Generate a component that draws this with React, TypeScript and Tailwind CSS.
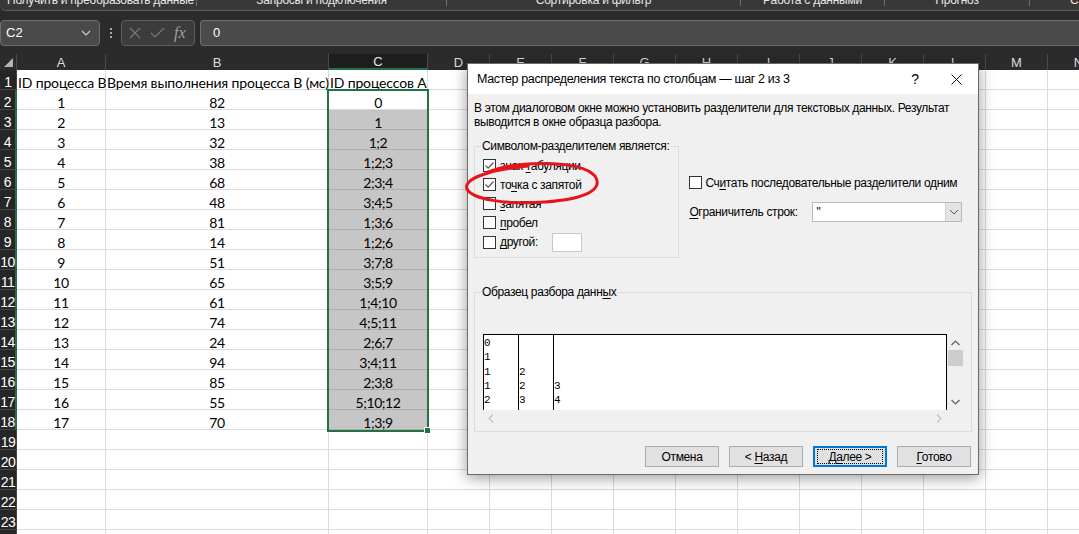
import React from 'react';

const COLS: { key: string; w: number }[] = [
  { key: 'A', w: 89 },
  { key: 'B', w: 223 },
  { key: 'C', w: 99 },
  { key: 'D', w: 62 },
  { key: 'E', w: 62 },
  { key: 'F', w: 62 },
  { key: 'G', w: 62 },
  { key: 'H', w: 62 },
  { key: 'I', w: 62 },
  { key: 'J', w: 62 },
  { key: 'K', w: 62 },
  { key: 'L', w: 62 },
  { key: 'M', w: 62 },
  { key: 'N', w: 62 },
];

const DATA: [number, number, string][] = [
  [1, 82, '0'],
  [2, 13, '1'],
  [3, 32, '1;2'],
  [4, 38, '1;2;3'],
  [5, 68, '2;3;4'],
  [6, 48, '3;4;5'],
  [7, 81, '1;3;6'],
  [8, 14, '1;2;6'],
  [9, 51, '3;7;8'],
  [10, 65, '3;5;9'],
  [11, 61, '1;4;10'],
  [12, 74, '4;5;11'],
  [13, 24, '2;6;7'],
  [14, 94, '3;4;11'],
  [15, 85, '2;3;8'],
  [16, 55, '5;10;12'],
  [17, 70, '1;3;9'],
];

const cellFont = "font-['Lato','Open_Sans',sans-serif]";
const uiFont = "font-['Liberation_Sans','Noto_Sans',sans-serif]";

function Ribbon() {
  const groups = [
    { w: 197, label: 'Получить и преобразовать данные' },
    { w: 250, label: 'Запросы и подключения' },
    { w: 294, label: 'Сортировка и фильтр' },
    { w: 144, label: 'Работа с данными' },
    { w: 145, label: 'Прогноз' },
    { w: 120, label: 'Структура' },
  ];
  return (
    <div className="h-[11px] overflow-hidden rounded-bl-[6px] border-b border-[#5c5c5c] bg-[#383838]">
      <div className={`-mt-[7px] flex h-[14px] ${uiFont} text-[12px] leading-[14px] tracking-[-0.25px] text-[#e6e6e6]`}>
        {groups.map((g, i) => (
          <div key={i} className="flex shrink-0 items-start" style={{ width: g.w }}>
            <span className={`flex-1 whitespace-nowrap ${i === 0 ? 'pl-[7px]' : i === 5 ? 'pl-[40px]' : 'text-center'}`}>{g.label}</span>
            {i < 5 && <span className="mt-[7px] h-[6px] w-px bg-[#707070]" />}
          </div>
        ))}
      </div>
    </div>
  );
}

function FormulaBar() {
  return (
    <div className={`flex h-[26px] items-stretch ${uiFont}`}>
      <div className="flex w-[100px] shrink-0 items-center justify-between rounded-[4px] border border-[#6e6e6e] bg-[#4a4a4a] pl-[5px] pr-[8px] text-[13px] text-white">
        <span>C2</span>
        <svg width="10" height="6" viewBox="0 0 10 6">
          <path d="M1 1 L5 5 L9 1" fill="none" stroke="#d0d0d0" strokeWidth="1.1" />
        </svg>
      </div>
      <div className="flex w-[21px] shrink-0 flex-col items-center justify-center gap-[2px]">
        <span className="h-[2px] w-[2px] bg-[#a8a8a8]" />
        <span className="h-[2px] w-[2px] bg-[#a8a8a8]" />
        <span className="h-[2px] w-[2px] bg-[#a8a8a8]" />
      </div>
      <div className="flex w-[74px] shrink-0 items-center gap-[9px] rounded-[4px] border border-[#5e5e5e] bg-[#3c3c3c] pl-[7px]">
        <svg width="12" height="12" viewBox="0 0 12 12">
          <path d="M1 1 L11 11 M11 1 L1 11" stroke="#7c7c7c" strokeWidth="1.1" />
        </svg>
        <svg width="15" height="12" viewBox="0 0 15 12">
          <path d="M1 6 L5 10 L14 1" fill="none" stroke="#7c7c7c" strokeWidth="1.1" />
        </svg>
        <span className="font-['Liberation_Serif',serif] text-[16px] italic leading-none text-[#a0a0a0]">fx</span>
      </div>
      <div className="ml-[5px] flex flex-1 items-center rounded-l-[4px] border-y border-l border-[#6e6e6e] bg-[#4a4a4a] pl-[12px] text-[13px] text-white">
        0
      </div>
    </div>
  );
}

function Grid() {
  const total = 24;
  return (
    <div className={`relative ${cellFont}`}>
      {/* column header row */}
      <div className="flex h-[16px]">
        <div className="relative w-[17px] shrink-0 border-r border-[#4a4a4a] bg-[#2b2b2b]">
          <svg className="absolute bottom-[3px] right-[3px]" width="9" height="9" viewBox="0 0 9 9">
            <path d="M9 0 L9 9 L0 9 Z" fill="#b4b4b4" />
          </svg>
        </div>
        {COLS.map((c) => (
          <div
            key={c.key}
            style={{ width: c.w }}
            className={`flex shrink-0 items-center justify-center border-r border-[#4a4a4a] text-[13px] leading-none ${uiFont} ${
              c.key === 'C' ? 'border-b-2 border-b-[#217346] bg-[#1e1e1e] text-[#e8e8e8]' : 'bg-[#2b2b2b] text-[#dcdcdc]'
            }`}
          >
            {c.key}
          </div>
        ))}
      </div>
      {Array.from({ length: total }, (_, i) => {
        const r = i + 1;
        const d = r >= 2 && r <= 18 ? DATA[r - 2] : null;
        const sel = r >= 2 && r <= 18;
        return (
          <div key={r} className="flex h-[20px]">
            <div
              className={`flex w-[17px] shrink-0 items-center justify-center border-b border-[#444] bg-[#262626] pt-[5px] text-[14px] leading-none tracking-[-0.5px] text-white ${uiFont} ${
                sel ? 'border-r-2 border-r-[#217346]' : 'border-r border-r-[#444]'
              }`}
            >
              {r}
            </div>
            {COLS.map((c) => {
              let content: React.ReactNode = null;
              let cls = 'bg-white border-[#dadada]';
              let align = 'justify-center tracking-[-0.4px]';
              if (r === 1) {
                align = 'justify-start pl-[1px] tracking-[-0.15px]';
                if (c.key === 'A') content = 'ID процесса В';
                if (c.key === 'B') content = 'Время выполнения процесса В (мс)';
                if (c.key === 'C') content = 'ID процессов А';
              } else if (d) {
                if (c.key === 'A') content = d[0];
                if (c.key === 'B') content = d[1];
                if (c.key === 'C') content = d[2];
              }
              if (c.key === 'C' && r >= 3 && r <= 18) cls = 'bg-[#c6c6c6] border-[#aeaeae]';
              return (
                <div
                  key={c.key}
                  style={{ width: c.w }}
                  className={`flex shrink-0 items-end whitespace-nowrap border-b border-r text-[14px] leading-[12px] text-black ${align} ${cls}`}
                >
                  {content}
                </div>
              );
            })}
          </div>
        );
      })}
      {/* selection C2:C18 */}
      <div className="pointer-events-none absolute left-[327px] top-[35px] h-[343px] w-[102px] border-2 border-[#217346]" />
      <div className="pointer-events-none absolute left-[424px] top-[373px] h-[7px] w-[7px] border border-white bg-[#217346]" />
    </div>
  );
}

function Check({ checked }: { checked?: boolean }) {
  return (
    <span className="flex h-[13px] w-[13px] shrink-0 items-center justify-center border border-[#333] bg-white">
      {checked && (
        <svg width="11" height="11" viewBox="0 0 11 11">
          <path d="M1.5 5.5 L4.2 8.2 L9.5 2.5" fill="none" stroke="#555" strokeWidth="1.2" />
        </svg>
      )}
    </span>
  );
}

function Btn({ children, primary }: { children: React.ReactNode; primary?: boolean }) {
  return (
    <div
      className={`flex h-[21px] w-[74px] items-center justify-center bg-[#e1e1e1] text-[12px] text-black ${
        primary ? 'border-2 border-[#0078d7]' : 'border border-[#adadad]'
      }`}
    >
      {primary ? (
        <span className="flex h-[15px] w-[66px] items-center justify-center border border-dotted border-black">
          <span>{children}</span>
        </span>
      ) : (
        <span>{children}</span>
      )}
    </div>
  );
}

function Dialog() {
  const u = 'underline underline-offset-[2px] decoration-[1px]';
  const opts: { label: React.ReactNode; checked?: boolean }[] = [
    { label: <>знак <u className={u}>т</u>абуляции</>, checked: true },
    { label: <>то<u className={u}>ч</u>ка с запятой</>, checked: true },
    { label: <><u className={u}>з</u>апятая</> },
    { label: <><u className={u}>п</u>робел</> },
  ];
  const preview = [
    ['0', '', ''],
    ['1', '', ''],
    ['1', '2', ''],
    ['1', '2', '3'],
    ['2', '3', '4'],
  ];
  return (
    <div
      className={`absolute left-[467px] top-[63px] flex h-[412px] w-[512px] flex-col border border-[#6b6b6b] bg-[#f0f0f0] text-[12px] tracking-[-0.35px] text-black shadow-[0_3px_14px_rgba(0,0,0,0.4)] ${uiFont}`}
    >
      <div className="flex h-[30px] shrink-0 items-center bg-white pl-[9px] text-[12.5px]">
        <span className="flex-1">Мастер распределения текста по столбцам — шаг 2 из 3</span>
        <span className="w-[20px] text-center text-[14px]">?</span>
        <span className="ml-[25px] mr-[16px] flex w-[12px] justify-center">
          <svg width="11" height="11" viewBox="0 0 11 11">
            <path d="M0.5 0.5 L10.5 10.5 M10.5 0.5 L0.5 10.5" stroke="#111" strokeWidth="1" />
          </svg>
        </span>
      </div>
      <div className="flex flex-1 flex-col px-[6px] pt-[7px]">
        <p className="whitespace-nowrap leading-[14px]">
          В этом диалоговом окне можно установить разделители для текстовых данных. Результат
          <br />
          выводится в окне образца разбора.
        </p>
        <div className="mt-[10px] flex">
          <fieldset className="h-[119px] w-[203px] border border-[#dcdcdc] px-[8px]">
            <legend className="ml-[-2px] whitespace-nowrap px-[1px] leading-[14px]">Символом-разделителем является:</legend>
            <div className="flex flex-col pt-[3px]">
              {opts.map((o, i) => (
                <div key={i} className="flex h-[19px] items-center gap-[4px]">
                  <Check checked={o.checked} />
                  <span>{o.label}</span>
                </div>
              ))}
              <div className="flex h-[20px] items-center gap-[4px]">
                <Check />
                <span className="w-[48px]">
                  <u className={u}>д</u>ругой:
                </span>
                <span className="h-[19px] w-[30px] border border-[#c8c8c8] bg-white" />
              </div>
            </div>
          </fieldset>
          <div className="ml-[10px] flex flex-col pt-[34px]">
            <div className="flex h-[19px] items-center gap-[3px] whitespace-nowrap">
              <Check />
              <span>
                Сч<u className={u}>и</u>тать последовательные разделители одним
              </span>
            </div>
            <div className="mt-[10px] flex h-[20px] items-center">
              <span className="w-[123px]">
                <u className={u}>О</u>граничитель строк:
              </span>
              <div className="flex h-[20px] w-[150px] border border-[#b9b9b9] bg-white">
                <span className="flex-1 pl-[3px] leading-[18px]">"</span>
                <span className="flex w-[16px] items-center justify-center border-l border-[#d0d0d0] bg-[#e3e3e3]">
                  <svg width="10" height="6" viewBox="0 0 10 6">
                    <path d="M1 1 L5 5 L9 1" fill="none" stroke="#555" strokeWidth="1" />
                  </svg>
                </span>
              </div>
            </div>
          </div>
        </div>
        <fieldset className="mt-[27px] h-[147px] w-[498px] border border-[#dcdcdc] pl-[8px] pr-[8px]">
          <legend className="ml-[-2px] px-[1px] leading-[14px]">
            Образец разбора данн<u className={u}>ы</u>х
          </legend>
          <div className="mt-[35px] grid grid-cols-[464px_16px] grid-rows-[76px_16px]">
            <div className="flex border-x border-t border-black bg-white font-['Liberation_Mono',monospace] text-[11px] leading-[14.3px] tracking-normal">
              <div className="w-[35px] border-r border-black pt-[1px]">
                {preview.map((p, i) => (
                  <div key={i}>{p[0]}</div>
                ))}
              </div>
              <div className="w-[35px] border-r border-black pt-[1px]">
                {preview.map((p, i) => (
                  <div key={i}>{p[1] || '\u00a0'}</div>
                ))}
              </div>
              <div className="flex-1 pt-[1px]">
                {preview.map((p, i) => (
                  <div key={i}>{p[2] || '\u00a0'}</div>
                ))}
              </div>
            </div>
            <div className="flex flex-col items-center">
              <svg className="mt-[6px]" width="9" height="6" viewBox="0 0 9 6">
                <path d="M0.5 5 L4.5 1 L8.5 5" fill="none" stroke="#606060" strokeWidth="1.2" />
              </svg>
              <span className="mt-[4px] h-[16px] w-[15px] bg-[#cdcdcd]" />
              <span className="flex-1" />
              <svg className="mb-[5px]" width="9" height="6" viewBox="0 0 9 6">
                <path d="M0.5 1 L4.5 5 L8.5 1" fill="none" stroke="#606060" strokeWidth="1.2" />
              </svg>
            </div>
            <div className="flex items-center justify-between px-[5px]">
              <svg width="6" height="9" viewBox="0 0 6 9">
                <path d="M5 0.5 L1 4.5 L5 8.5" fill="none" stroke="#c2c2c2" strokeWidth="1.2" />
              </svg>
              <svg width="6" height="9" viewBox="0 0 6 9">
                <path d="M1 0.5 L5 4.5 L1 8.5" fill="none" stroke="#c2c2c2" strokeWidth="1.2" />
              </svg>
            </div>
            <div />
          </div>
        </fieldset>
        <div className="mt-[14px] flex justify-end gap-[10px] pr-[1px]">
          <Btn>Отмена</Btn>
          <Btn>
            &lt; <u className={u}>Н</u>азад
          </Btn>
          <Btn primary>
            Д<u className={u}>а</u>лее &gt;
          </Btn>
          <Btn>
            <u className={u}>Г</u>отово
          </Btn>
        </div>
      </div>
    </div>
  );
}

export default function App() {
  return (
    <div className="relative h-[534px] w-[1079px] overflow-hidden bg-[#2b2b2b]">
      <Ribbon />
      <div className="h-[9px]" />
      <FormulaBar />
      <div className="h-[8px]" />
      <Grid />
      <Dialog />
      <svg className="pointer-events-none absolute left-0 top-0" width="1079" height="534">
        <path
          d="M488 172 C 520 160, 580 160, 595 176 C 604 190, 585 199, 545 202 C 505 205, 472 199, 467 189 C 463 179, 488 170, 528 166"
          fill="none"
          stroke="#e8141c"
          strokeWidth="3"
          strokeLinecap="round"
        />
      </svg>
    </div>
  );
}
